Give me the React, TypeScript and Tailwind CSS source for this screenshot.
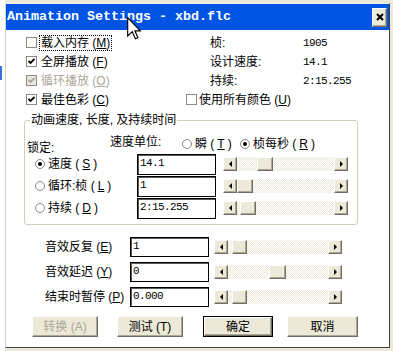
import React from "react";

const raised =
  "bg-[#ece9d8] border border-t-white border-l-white border-r-[#716f64] border-b-[#716f64] shadow-[inset_-1px_-1px_#aca899]";
const mono = "font-['Liberation_Mono',monospace] text-[11px] tracking-[-0.6px]";

function Check({ checked, disabled }: { checked?: boolean; disabled?: boolean }) {
  return (
    <span
      className={`w-[11px] h-[11px] shrink-0 border border-[#8a8a80] flex items-center justify-center ${
        disabled ? "bg-[#e9e7dd]" : "bg-white"
      }`}
    >
      {checked && (
        <svg width="7" height="7" viewBox="0 0 7 7">
          <path d="M0.5 3 L2.5 5 L6.5 1" fill="none" stroke={disabled ? "#aca899" : "#000"} strokeWidth="1.8" />
        </svg>
      )}
    </span>
  );
}

function Radio({ on }: { on?: boolean }) {
  return (
    <span className="w-[10px] h-[10px] shrink-0 rounded-full border border-[#8a8a80] bg-white flex items-center justify-center">
      {on && <span className="w-[4px] h-[4px] rounded-full bg-black" />}
    </span>
  );
}

function Arrow({ left }: { left?: boolean }) {
  return (
    <span className={`w-[14px] h-full shrink-0 flex items-center justify-center ${raised}`}>
      <span
        className={
          left
            ? "w-0 h-0 border-y-[3px] border-y-transparent border-r-[3px] border-r-black"
            : "w-0 h-0 border-y-[3px] border-y-transparent border-l-[3px] border-l-black"
        }
      />
    </span>
  );
}

function Scroll({ className, thumb }: { className: string; thumb: string }) {
  return (
    <div className={`h-[14px] flex ${className}`}>
      <Arrow left />
      <div className="flex-1 flex bg-[image:repeating-conic-gradient(#ece9d8_0_25%,#ffffff_0_50%)] bg-[length:2px_2px]">
        <span className={`h-full ${raised} ${thumb}`} />
      </div>
      <Arrow />
    </div>
  );
}

function Field({ value, className }: { value: string; className: string }) {
  return (
    <div
      className={`w-[79px] bg-white border border-black shadow-[inset_1px_1px_#5a5a5a] pl-[2px] flex items-center ${mono} ${className}`}
    >
      <span className="-mt-[2px]">{value}</span>
    </div>
  );
}

function Btn({ label, className, disabled, def }: { label: string; className: string; disabled?: boolean; def?: boolean }) {
  return (
    <div className={`h-[21px] ${def ? "border border-black" : ""} ${className}`}>
      <div
        className={`w-full h-full flex items-center justify-center ${raised} ${
          disabled ? "text-[#aca899]" : "text-black"
        }`}
      >
        {label}
      </div>
    </div>
  );
}

export default function App() {
  return (
    <div className="w-[393px] h-[351px] overflow-hidden flex bg-[#ece9d8] relative font-['Liberation_Sans','Noto_Sans_CJK_SC',sans-serif] text-[12px] leading-[12px] text-black">
      <div className="w-[5px] h-full bg-white flex flex-col">
        <div className="h-[66px]" />
        <div className="h-[14px] w-[2px] bg-[#3f6fd8]" />
      </div>

      <div className="w-[385px] h-[345px] mt-[3px] bg-white border-t border-t-[#eef0f8] border-l border-l-[#d4d0c8] border-r border-r-[#404040] border-b border-b-[#404040] flex flex-col">
        {/* title bar */}
        <div className="h-[26px] shrink-0 bg-[#0054e3] flex items-center pl-[1px] pr-[2px]">
          <span className="flex-1 text-white font-bold text-[13.33px] leading-[14px] font-['Liberation_Mono',monospace] whitespace-pre">
            Animation Settings - xbd.flc
          </span>
          <span className={`w-[15px] h-[19px] flex items-center justify-center ${raised}`}>
            <svg width="8" height="8" viewBox="0 0 8 8">
              <path d="M1 1 L7 7 M7 1 L1 7" stroke="#000" strokeWidth="2" />
            </svg>
          </span>
        </div>

        {/* top options */}
        <div className="pt-[3px] flex">
          <div className="w-[180px] pl-[20px] flex flex-col">
            <div className="h-[19px] flex items-center gap-[2px]">
              <Check />
              <span className="border border-dotted border-black px-[1px] py-[1px]">载入内存 (<u>M</u>)</span>
            </div>
            <div className="h-[19px] flex items-center gap-[4px]">
              <Check checked />
              <span>全屏播放 (<u>F</u>)</span>
            </div>
            <div className="h-[19px] flex items-center gap-[4px] text-[#aca899]">
              <Check checked disabled />
              <span>循环播放 (<u>O</u>)</span>
            </div>
            <div className="h-[19px] flex items-center gap-[4px]">
              <Check checked />
              <span>最佳色彩 (<u>C</u>)</span>
            </div>
          </div>
          <div className="flex-1 flex flex-col">
            <div className="h-[19px] flex items-center pl-[24px]">
              <span className="w-[93px]">桢:</span>
              <span className={mono}>1905</span>
            </div>
            <div className="h-[19px] flex items-center pl-[24px]">
              <span className="w-[93px]">设计速度:</span>
              <span className={mono}>14.1</span>
            </div>
            <div className="h-[19px] flex items-center pl-[24px]">
              <span className="w-[93px]">持续:</span>
              <span className={mono}>2:15.255</span>
            </div>
            <div className="h-[19px] flex items-center gap-[2px]">
              <Check />
              <span>使用所有颜色 (<u>U</u>)</span>
            </div>
          </div>
        </div>

        {/* group box */}
        <fieldset className="ml-[18px] mt-[5px] w-[334px] border border-[#d0d0bf] rounded-[3px] pb-[5px]">
          <legend className="ml-[5px] px-[1px] leading-[12px]">动画速度, 长度, 及持续时间</legend>
          <div className="h-[27px] flex">
            <span className="w-[85px] pl-[2px] mt-[16px]">锁定:</span>
            <span className="w-[72px] mt-[10px]">速度单位:</span>
            <span className="w-[58px] mt-[9px] flex items-center gap-[3px]">
              <Radio />
              瞬 (<u>T</u>)
            </span>
            <span className="mt-[9px] flex items-center gap-[3px]">
              <Radio on />
              桢每秒 (<u>R</u>)
            </span>
          </div>
          <div className="h-[22px] flex items-center">
            <span className="w-[112px] pl-[10px] flex items-center gap-[3px]">
              <Radio on />
              速度 (<u>S</u>)
            </span>
            <Field value="14.1" className="h-[21px]" />
            <Scroll className="ml-[7px] w-[125px]" thumb="ml-[20px] w-[16px]" />
          </div>
          <div className="h-[22px] flex items-center">
            <span className="w-[112px] pl-[10px] flex items-center gap-[3px]">
              <Radio />
              循环:桢 (<u>L</u>)
            </span>
            <Field value="1" className="h-[21px]" />
            <Scroll className="ml-[7px] w-[125px]" thumb="ml-0 w-[16px]" />
          </div>
          <div className="h-[22px] flex items-center">
            <span className="w-[112px] pl-[10px] flex items-center gap-[3px]">
              <Radio />
              持续 (<u>D</u>)
            </span>
            <Field value="2:15.255" className="h-[21px]" />
            <Scroll className="ml-[7px] w-[125px]" thumb="ml-[3px] w-[16px]" />
          </div>
        </fieldset>

        {/* sound / pause */}
        <div className="mt-[12px] pl-[39px] flex flex-col gap-[5px]">
          <div className="h-[20px] flex items-center">
            <span className="w-[85px]">音效反复 (<u>E</u>)</span>
            <Field value="1" className="h-[20px]" />
            <Scroll className="ml-[5px] w-[128px]" thumb="ml-[4px] w-[15px]" />
          </div>
          <div className="h-[20px] flex items-center">
            <span className="w-[85px]">音效延迟 (<u>Y</u>)</span>
            <Field value="0" className="h-[20px]" />
            <Scroll className="ml-[5px] w-[128px]" thumb="ml-[41px] w-[17px]" />
          </div>
          <div className="h-[20px] flex items-center">
            <span className="w-[85px]">结束时暂停 (<u>P</u>)</span>
            <Field value="0.000" className="h-[20px]" />
            <Scroll className="ml-[5px] w-[128px]" thumb="ml-[4px] w-[15px]" />
          </div>
        </div>

        {/* buttons */}
        <div className="mt-[9px] flex">
          <Btn label="转换 (A)" disabled className="ml-[26px] w-[66px]" />
          <Btn label="测试 (T)" className="ml-[19px] w-[66px]" />
          <Btn label="确定" def className="ml-[20px] w-[70px]" />
          <Btn label="取消" className="ml-[14px] w-[71px]" />
        </div>
      </div>

      {/* mouse cursor over the title bar */}
      <svg className="absolute left-[127px] top-[17px]" width="14" height="23" viewBox="0 0 12 20">
        <path
          d="M0.5 0.5 L0.5 16.5 L4.5 12.8 L7.2 19 L9.4 18 L6.8 12 L11.5 12 Z"
          fill="#fff"
          stroke="#000"
          strokeWidth="1"
          strokeLinejoin="miter"
        />
      </svg>
    </div>
  );
}
